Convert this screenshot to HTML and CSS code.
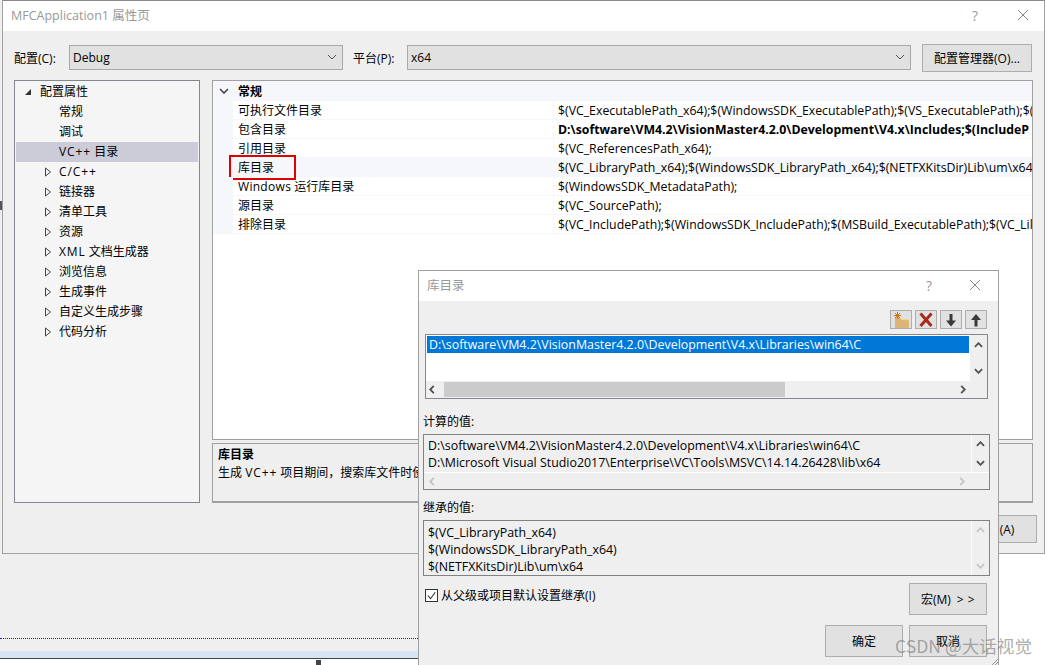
FILE: index.html
```html
<!DOCTYPE html>
<html lang="zh">
<head>
<meta charset="utf-8">
<title>MFCApplication1 属性页</title>
<link rel="stylesheet" href="styles.css">
</head>
<body>
<div class="backdrop">
  <div class="backdrop-fill"></div>
  <div class="dotted"></div>
  <div class="backdrop-gap"></div>
  <div class="tab-strip"></div>
</div>
<div class="speck"></div>
<div class="handle"></div>

<section class="window main-window">
  <header class="titlebar main-title">
    <span class="title-text">MFCApplication1 属性页</span>
    <span class="help">?</span>
    <svg class="close" viewBox="0 0 12 12"><path d="M1 1l10 10M11 1L1 11"/></svg>
  </header>
  <div class="main-body">
    <div class="config-row">
      <label class="cfg-label cfg-first">配置(C):</label>
      <div class="combo combo-config"><span>Debug</span><svg class="combo-arrow" viewBox="0 0 10 6"><path d="M1 1l4 4 4-4"/></svg></div>
      <label class="cfg-label cfg-second">平台(P):</label>
      <div class="combo combo-platform"><span>x64</span><svg class="combo-arrow" viewBox="0 0 10 6"><path d="M1 1l4 4 4-4"/></svg></div>
      <button class="btn btn-manager">配置管理器(O)...</button>
    </div>
    <div class="panes">
      <nav class="tree">
        <div class="tree-row"><svg class="tw" viewBox="0 0 8 8"><path class="solid" d="M7 1v6H1z"/></svg>配置属性</div>
        <div class="tree-row leaf">常规</div>
        <div class="tree-row leaf">调试</div>
        <div class="tree-row leaf selected"><span class="wide">VC++</span> 目录</div>
        <div class="tree-row child"><svg class="tw" viewBox="0 0 8 10"><path d="M1.5 1l5 4-5 4z"/></svg><span class="wide">C/C++</span></div>
        <div class="tree-row child"><svg class="tw" viewBox="0 0 8 10"><path d="M1.5 1l5 4-5 4z"/></svg>链接器</div>
        <div class="tree-row child"><svg class="tw" viewBox="0 0 8 10"><path d="M1.5 1l5 4-5 4z"/></svg>清单工具</div>
        <div class="tree-row child"><svg class="tw" viewBox="0 0 8 10"><path d="M1.5 1l5 4-5 4z"/></svg>资源</div>
        <div class="tree-row child"><svg class="tw" viewBox="0 0 8 10"><path d="M1.5 1l5 4-5 4z"/></svg><span class="wide">XML</span> 文档生成器</div>
        <div class="tree-row child"><svg class="tw" viewBox="0 0 8 10"><path d="M1.5 1l5 4-5 4z"/></svg>浏览信息</div>
        <div class="tree-row child"><svg class="tw" viewBox="0 0 8 10"><path d="M1.5 1l5 4-5 4z"/></svg>生成事件</div>
        <div class="tree-row child"><svg class="tw" viewBox="0 0 8 10"><path d="M1.5 1l5 4-5 4z"/></svg>自定义生成步骤</div>
        <div class="tree-row child"><svg class="tw" viewBox="0 0 8 10"><path d="M1.5 1l5 4-5 4z"/></svg>代码分析</div>
      </nav>
      <div class="right-pane">
        <div class="grid">
          <div class="group-row"><svg class="group-chevron" viewBox="0 0 10 6"><path d="M1 1l4 4 4-4"/></svg><b>常规</b></div>
          <div class="prop"><span class="prop-name">可执行文件目录</span><span class="prop-value">$(VC_ExecutablePath_x64);$(WindowsSDK_ExecutablePath);$(VS_ExecutablePath);$(</span></div>
          <div class="prop"><span class="prop-name">包含目录</span><span class="prop-value strong">D:\software\VM4.2\VisionMaster4.2.0\Development\V4.x\Includes;$(IncludeP</span></div>
          <div class="prop"><span class="prop-name">引用目录</span><span class="prop-value">$(VC_ReferencesPath_x64);</span></div>
          <div class="prop active"><span class="prop-name">库目录</span><span class="prop-value">$(VC_LibraryPath_x64);$(WindowsSDK_LibraryPath_x64);$(NETFXKitsDir)Lib\um\x64</span><span class="red-box"></span></div>
          <div class="prop"><span class="prop-name"><span class="wide-s">Windows</span> 运行库目录</span><span class="prop-value">$(WindowsSDK_MetadataPath);</span></div>
          <div class="prop"><span class="prop-name">源目录</span><span class="prop-value">$(VC_SourcePath);</span></div>
          <div class="prop"><span class="prop-name">排除目录</span><span class="prop-value">$(VC_IncludePath);$(WindowsSDK_IncludePath);$(MSBuild_ExecutablePath);$(VC_Lil</span></div>
        </div>
        <div class="desc">
          <b>库目录</b>
          <p>生成 <span class="wide">VC++</span> 项目期间，搜索库文件时使用的路径。</p>
        </div>
      </div>
    </div>
    <div class="apply-row"><button class="btn btn-apply">应用(A)</button></div>
  </div>
</section>

<section class="window dialog">
  <header class="titlebar dialog-title">
    <span class="title-text">库目录</span>
    <span class="help">?</span>
    <svg class="close" viewBox="0 0 12 12"><path d="M1 1l10 10M11 1L1 11"/></svg>
  </header>
  <div class="dialog-body">
    <div class="toolbar">
      <span class="tool"><svg viewBox="0 0 20 17"><path fill="#dcb477" d="M4 6h5l1 2h8v9H4z"/><path fill="#ecd2a4" d="M10 8h8v1.200H10z"/><path stroke="#cc7a10" d="M6.500 1v7M3 4.500h7M4 2l5 5M9 2L4 7"/></svg></span>
      <span class="tool"><svg viewBox="0 0 20 17"><path stroke="#a82a18" stroke-width="3" d="M4.500 2.500l11 12.500M15.500 2.500l-11 12.500"/></svg></span>
      <span class="tool"><svg viewBox="0 0 20 17"><path fill="#3a3a3a" d="M8.500 3h3v6.500H15L10 15.500 5 9.500h3.500z"/></svg></span>
      <span class="tool"><svg viewBox="0 0 20 17"><path fill="#3a3a3a" d="M10 3l5 6h-3.500v6.500h-3V9H5z"/></svg></span>
    </div>
    <div class="listbox">
      <div class="list-main">
        <div class="list-view"><div class="list-sel">D:\software\VM4.2\VisionMaster4.2.0\Development\V4.x\Libraries\win64\C</div></div>
        <div class="vbar">
          <svg viewBox="0 0 10 6"><path d="M1 5l4-4 4 4"/></svg>
          <svg viewBox="0 0 10 6"><path d="M1 1l4 4 4-4"/></svg>
        </div>
      </div>
      <div class="hbar">
        <svg viewBox="0 0 6 10"><path d="M5 1L1 5l4 4"/></svg>
        <div class="hthumb-track"><div class="hthumb"></div></div>
        <svg viewBox="0 0 6 10"><path d="M1 1l4 4-4 4"/></svg>
      </div>
    </div>
    <div class="field-label first-label">计算的值:</div>
    <div class="readonly-box">
      <div class="ro-main">
        <div class="ro-text">
          <div>D:\software\VM4.2\VisionMaster4.2.0\Development\V4.x\Libraries\win64\C</div>
          <div>D:\Microsoft Visual Studio2017\Enterprise\VC\Tools\MSVC\14.14.26428\lib\x64</div>
        </div>
        <div class="vbar vbar-ro">
          <svg viewBox="0 0 10 6"><path d="M1 5l4-4 4 4"/></svg>
          <svg viewBox="0 0 10 6"><path d="M1 1l4 4 4-4"/></svg>
        </div>
      </div>
      <div class="hbar hbar-ro">
        <svg viewBox="0 0 6 10"><path d="M5 1L1 5l4 4"/></svg>
        <svg viewBox="0 0 6 10"><path d="M1 1l4 4-4 4"/></svg>
      </div>
    </div>
    <div class="field-label second-label">继承的值:</div>
    <div class="readonly-box">
      <div class="ro-main tall">
        <div class="ro-text">
          <div>$(VC_LibraryPath_x64)</div>
          <div>$(WindowsSDK_LibraryPath_x64)</div>
          <div>$(NETFXKitsDir)Lib\um\x64</div>
        </div>
        <div class="vbar vbar-ro disabled">
          <svg viewBox="0 0 10 6"><path d="M1 5l4-4 4 4"/></svg>
          <svg viewBox="0 0 10 6"><path d="M1 1l4 4 4-4"/></svg>
        </div>
      </div>
    </div>
    <div class="inherit-row">
      <label class="check-wrap">
        <span class="check"><svg viewBox="0 0 12 12"><path d="M2 6l3 3.500L10 2.500"/></svg></span>
        <span>从父级或项目默认设置继承(I)</span>
      </label>
      <button class="btn btn-dialog">宏(M)<span class="chevrons">&gt; &gt;</span></button>
    </div>
    <div class="dialog-actions">
      <button class="btn btn-dialog">确定</button>
      <button class="btn btn-dialog">取消</button>
    </div>
  </div>
  <svg class="grip" viewBox="0 0 6 6"><path d="M6 0L0 6M6 3L3 6"/></svg>
</section>

<div class="watermark">CSDN @大话视觉</div>
</body>
</html>
```
FILE: styles.css
```css
html, body {
  margin: 0;
  padding: 0;
  background: #fff;
}
body {
  position: relative;
  width: 1047px;
  height: 665px;
  overflow: hidden;
  font-family: "Open Sans", "Noto Sans CJK SC", sans-serif;
  font-size: 12px;
  line-height: 17px;
  color: #000;
}
svg { display: block; fill: none; }
button { font: inherit; color: inherit; }
.wide { letter-spacing: 0.9px; }
.wide-s { letter-spacing: 0.3px; }

/* Things behind the windows */
.backdrop {
  position: absolute;
  left: 0;
  top: 0;
  width: 420px;
  height: 659px;
  display: flex;
  flex-direction: column;
  background: #efefef;
}
.backdrop-fill { height: 638px; }
.dotted { border-top: 1px dotted #1a1ad0; }
.backdrop-gap { height: 12px; }
.tab-strip {
  height: 7px;
  background: #d8e5f2;
  border-bottom: 1px solid #444;
}
.speck {
  position: absolute;
  left: 0;
  top: 201px;
  width: 2px;
  height: 9px;
  background: #555;
}
.handle {
  position: absolute;
  left: 316px;
  top: 660px;
  width: 5px;
  height: 5px;
  background: #444;
}

/* Windows */
.window {
  position: absolute;
  box-sizing: border-box;
  background: #efefef;
  border: 1px solid #a0a0a0;
  display: flex;
  flex-direction: column;
}
.main-window {
  left: 2px;
  top: 0;
  width: 1043px;
  height: 554px;
  border-top-color: #888;
}
.dialog {
  left: 418px;
  top: 270px;
  width: 581px;
  height: 400px;
}
.titlebar {
  position: relative;
  flex: none;
  background: #fff;
  display: flex;
  align-items: center;
}
.main-title { height: 28px; padding-left: 8px; padding-bottom: 2px; }
.dialog-title { height: 28px; padding-left: 8px; padding-bottom: 2px; }
.title-text { flex: 1; color: #999; font-size: 12.500px; }
.help { color: #999; font-size: 14px; }
.close { width: 12px; height: 12px; }
.close path { stroke: #888; stroke-width: 1; }
.main-title .help { margin-right: 39px; }
.main-title .close { margin-right: 15px; }
.dialog-title .help { margin-right: 37px; }
.dialog-title .close { margin-right: 17px; }

/* Main window body */
.main-body {
  flex: 1;
  display: flex;
  flex-direction: column;
  padding: 13px 11px 0 11px;
}
.config-row {
  display: flex;
  align-items: center;
  height: 28px;
}
.cfg-label { flex: none; }
.cfg-first { width: 55px; }
.cfg-second { width: 54px; margin-left: 10px; }
.combo {
  box-sizing: border-box;
  flex: none;
  height: 25px;
  margin-bottom: 2px;
  background: #e1e1e1;
  border: 1px solid #a8a8a8;
  display: flex;
  align-items: center;
  justify-content: space-between;
  padding: 0 5px 0 3px;
}
.combo-config { width: 274px; }
.combo-platform { width: 504px; }
.combo-arrow { width: 10px; height: 6px; }
.combo-arrow path { stroke: #555; stroke-width: 1; }
.group-chevron path { stroke: #444; stroke-width: 1.600; }
.btn {
  box-sizing: border-box;
  background: #e1e1e1;
  border: 1px solid #adadad;
  padding: 0;
  text-align: center;
}
.btn-manager { width: 110px; height: 28px; margin-left: 11px; }

.panes {
  display: flex;
  margin-top: 8px;
  height: 423px;
}
.tree {
  box-sizing: border-box;
  flex: none;
  width: 186px;
  background: #f5f5f5;
  border: 1px solid #828790;
  padding: 1px 1px 0;
}
.tree-row {
  position: relative;
  height: 20px;
  line-height: 20px;
  padding-left: 24px;
}
.tree-row.leaf { padding-left: 43px; }
.tree-row.child { padding-left: 43px; }
.tree-row.selected { background: #cbccd8; }
.tw {
  position: absolute;
  left: 8px;
  top: 6px;
  width: 8px;
  height: 8px;
}
.tw path { stroke: #444; stroke-width: 1; }
.tw path.solid { fill: #333; stroke: none; }
.tree-row.child .tw { left: 28px; top: 5px; height: 10px; }

.right-pane {
  flex: none;
  width: 821px;
  margin-left: 12px;
  display: flex;
  flex-direction: column;
}
.grid {
  box-sizing: border-box;
  height: 360px;
  background: #fff;
  border: 1px solid #a0a0a0;
  overflow: hidden;
}
.group-row {
  position: relative;
  height: 20px;
  line-height: 22px;
  padding-left: 25px;
  background: #f5f7fb;
}
.group-chevron {
  position: absolute;
  left: 6px;
  top: 7px;
  width: 10px;
  height: 6px;
}
.prop {
  position: relative;
  display: flex;
  height: 19px;
  line-height: 20px;
  box-sizing: border-box;
  border-left: 20px solid #f5f7fb;
  border-bottom: 1px solid #f5f7fb;
  white-space: nowrap;
}
.prop.active { background: #f5f7fb; }
.prop-name {
  flex: none;
  box-sizing: border-box;
  width: 321px;
  padding-left: 5px;
  border-right: 1px solid #f5f7fb;
}
.prop-value {
  flex: 1;
  min-width: 0;
  overflow: hidden;
  padding-left: 4px;
  font-size: 12.300px;
}
.strong { font-weight: 700; }
.red-box {
  position: absolute;
  left: -4px;
  top: -3px;
  width: 63px;
  height: 21px;
  border: 2px solid #e00000;
}
.desc {
  box-sizing: border-box;
  height: 60px;
  margin-top: 3px;
  padding: 2px 5px;
  border: 1px solid #a0a0a0;
  border-bottom-width: 2px;
}
.desc b { display: block; }
.desc p { margin: 1px 0 0; white-space: nowrap; }
.apply-row {
  display: flex;
  justify-content: flex-end;
  margin-top: 12px;
  margin-right: -4px;
}
.btn-apply { width: 80px; height: 28px; padding-right: 4px; }

/* Dialog */
.dialog-body {
  flex: 1;
  display: flex;
  flex-direction: column;
  padding: 9px 11px 0 4px;
}
.toolbar {
  display: flex;
  justify-content: flex-end;
  gap: 3px;
  height: 19px;
}
.tool {
  box-sizing: border-box;
  width: 22px;
  height: 19px;
  background: #e1e1e1;
  border: 1px solid #adadad;
}
.tool svg { width: 20px; height: 17px; }
.listbox {
  box-sizing: border-box;
  margin: 5px 0 0 2px;
  width: 563px;
  height: 65px;
  border: 1px solid #828790;
  display: flex;
  flex-direction: column;
}
.list-main { display: flex; height: 46px; }
.list-view {
  flex: 1;
  background: #fff;
  padding: 1px;
}
.list-sel {
  background: #0078d7;
  color: #fff;
  height: 17px;
  line-height: 17px;
  padding-left: 2px;
  white-space: nowrap;
  overflow: hidden;
  font-size: 12.400px;
}
.vbar {
  flex: none;
  box-sizing: border-box;
  width: 17px;
  display: flex;
  flex-direction: column;
  align-items: center;
  justify-content: space-between;
  padding: 7px 0;
}
.vbar svg { width: 9px; height: 6px; }
.vbar path, .hbar path { stroke: #505050; stroke-width: 2; }
.hbar {
  display: flex;
  align-items: center;
  height: 16px;
  padding: 0 21px 0 3px;
  justify-content: space-between;
}
.hbar svg { width: 6px; height: 9px; flex: none; }
.hthumb-track {
  flex: 1;
  margin: 0 0 0 9px;
  height: 15px;
  padding-right: 175px;
}
.hthumb { height: 15px; background: #cbcbcb; }
.field-label { height: 17px; }
.first-label { margin-top: 14px; }
.second-label { margin-top: 9px; }
.readonly-box {
  box-sizing: border-box;
  margin-top: 4px;
  width: 567px;
  height: 56px;
  border: 1px solid #828282;
  display: flex;
  flex-direction: column;
}
.ro-main {
  display: flex;
  flex: 1;
  min-height: 0;
  border-bottom: 1px solid #fff;
}
.ro-main.tall { border-bottom: none; }
.ro-text {
  flex: 1;
  min-width: 0;
  padding: 2px 0 0 4px;
  white-space: nowrap;
  overflow: hidden;
  border-right: 1px solid #fff;
  font-size: 12.400px;
}
.tall .ro-text { padding-top: 3px; }
.vbar-ro { padding: 6px 0; }
.vbar.disabled path, .hbar-ro path { stroke: #c4c4c4; }
.hbar-ro { flex: none; height: 16px; padding: 0 24px 0 5px; }
.inherit-row {
  display: flex;
  justify-content: space-between;
  margin-top: 7px;
}
.check-wrap {
  display: flex;
  align-items: center;
  height: 24px;
  margin-left: 2px;
  gap: 3px;
}
.check {
  box-sizing: border-box;
  width: 13px;
  height: 13px;
  background: #fff;
  border: 1px solid #333;
}
.check path { stroke: #333; stroke-width: 1.200; }
.btn-dialog { width: 78px; height: 32px; flex: none; }
.chevrons { margin-left: 6px; letter-spacing: 0.5px; }
.dialog-actions {
  display: flex;
  justify-content: flex-end;
  gap: 6px;
  margin-top: 10px;
}
.grip {
  position: absolute;
  right: 0;
  top: 388px;
  width: 6px;
  height: 6px;
}
.grip path { stroke: #999; stroke-width: 1; }

.watermark {
  position: absolute;
  left: 895px;
  top: 634px;
  font-family: "Noto Sans CJK SC", sans-serif;
  font-size: 17.600px;
  line-height: 24px;
  color: rgba(120, 120, 120, 0.62);
  white-space: nowrap;
}
```
